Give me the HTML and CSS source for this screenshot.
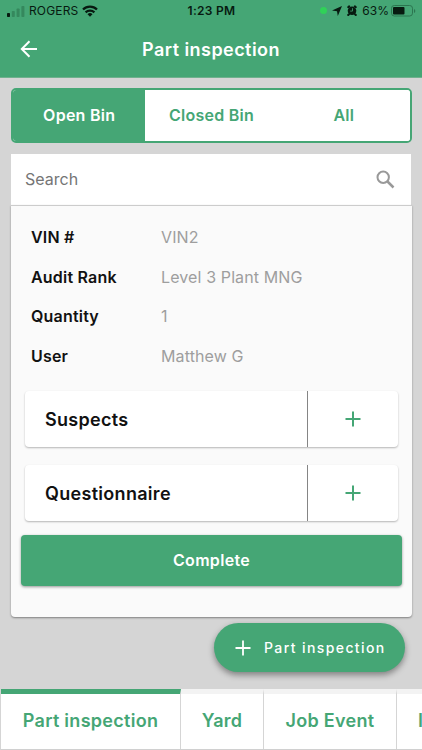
FILE: index.html
```html
<!DOCTYPE html>
<html lang="en">
<head>
    <meta charset="UTF-8">
    <meta name="viewport" content="width=device-width, initial-scale=1.0">
    <title>Part inspection</title>
    <link rel="stylesheet" href="styles.css">
</head>
<body>

<div class="app">
    <header class="header">
        <div class="status">
            <div class="status-left">
                <svg width="18" height="12" viewBox="0 0 18 12">
                    <rect x="0" y="8" width="3" height="4" rx=".7" fill="#071a10"/>
                    <g fill="#35885d">
                        <rect x="4.8" y="6" width="3" height="6" rx=".7"/>
                        <rect x="9.6" y="3.5" width="3" height="8.500" rx=".7"/>
                        <rect x="14.400" y="1" width="3" height="11" rx=".7"/>
                    </g>
                </svg>
                <span class="carrier">ROGERS</span>
                <svg class="wifi" width="16" height="12" viewBox="0 0 16 12">
                    <g fill="none" stroke="#071a10" stroke-width="2.300">
                        <path d="M1 4.500a10 10 0 0 1 14 0"/>
                        <path d="M3.600 7.400a6.300 6.300 0 0 1 8.800 0"/>
                    </g>
                    <path d="M5.500 9.200a3.700 3.700 0 0 1 5 0L8 11.700z" fill="#071a10"/>
                </svg>
            </div>
            <span class="time">1:23 PM</span>
            <div class="status-right">
                <span class="dot"></span>
                <svg class="location" width="10" height="10" viewBox="0 0 10 10"><path d="M10 0L5.800 10 5 5.200 0 4.500z" fill="#071a10"/></svg>
                <svg class="alarm" width="10" height="11" viewBox="0 0 10 11">
                    <circle cx="5" cy="5.800" r="4.300" fill="#071a10"/>
                    <path d="M1.200 2.200L2.200 1.300M8.800 2.200L7.800 1.300M2 9.200L1.200 10M8 9.200l.8.8" stroke="#071a10" stroke-width="2" stroke-linecap="round"/>
                    <path d="M5.500 3.200v2.900H3.200" fill="none" stroke="#45a675" stroke-width=".8"/>
                </svg>
                <span class="percent">63%</span>
                <svg class="battery" width="25" height="12" viewBox="0 0 25 12">
                    <rect x=".5" y=".5" width="21" height="10.500" rx="2.800" fill="none" stroke="#2c7550"/>
                    <rect x="2" y="2" width="11.500" height="7.500" rx="1" fill="#071a10"/>
                    <path d="M23 4v4q1.300-.6 1.300-2T23 4" fill="#2c7550"/>
                </svg>
            </div>
        </div>
        <div class="title-bar">
            <svg class="back" width="18" height="18" viewBox="0 0 18 18"><path d="M17 9H2M9.500 1.300L1.800 9l7.700 7.700" fill="none" stroke="#fff" stroke-width="2"/></svg>
            <h1>Part inspection</h1>
        </div>
    </header>

    <main class="content">
        <div class="segments">
            <button class="segment active">Open Bin</button>
            <button class="segment">Closed Bin</button>
            <button class="segment">All</button>
        </div>

        <div class="search">
            <span>Search</span>
            <svg width="19" height="19" viewBox="0 0 19 19" fill="none" stroke="#999">
                <circle cx="7.200" cy="7.200" r="5.700" stroke-width="2"/>
                <path d="M11.500 11.500l6 6" stroke-width="2.500"/>
            </svg>
        </div>

        <section class="card">
            <dl class="details">
                <dt>VIN #</dt><dd>VIN2</dd>
                <dt>Audit Rank</dt><dd>Level 3 Plant MNG</dd>
                <dt>Quantity</dt><dd>1</dd>
                <dt>User</dt><dd>Matthew G</dd>
            </dl>
            <div class="row">
                <span class="row-name">Suspects</span>
                <span class="row-add"><svg width="16" height="16" viewBox="0 0 16 16"><path d="M8 .5v15M.5 8h15" stroke="#45a675" stroke-width="2"/></svg></span>
            </div>
            <div class="row">
                <span class="row-name">Questionnaire</span>
                <span class="row-add"><svg width="16" height="16" viewBox="0 0 16 16"><path d="M8 .5v15M.5 8h15" stroke="#45a675" stroke-width="2"/></svg></span>
            </div>
            <button class="complete">Complete</button>
        </section>
    </main>

    <button class="fab">
        <svg width="16" height="16" viewBox="0 0 16 16"><path d="M8 .5v15M.5 8h15" stroke="#fff" stroke-width="1.800"/></svg>
        <span>Part inspection</span>
    </button>

    <nav class="tabs">
        <a class="tab tab-parts active">Part inspection</a>
        <a class="tab tab-yard">Yard</a>
        <a class="tab tab-event">Job Event</a>
        <a class="tab tab-next">I</a>
    </nav>
</div>

</body>
</html>
```

FILE: styles.css
```css
* {
    box-sizing: border-box;
}
body {
    margin: 0;
    font-family: Inter, "Liberation Sans", sans-serif;
    background: #d5d5d5;
}
button {
    border: none;
    padding: 0;
    font-family: inherit;
}
svg {
    display: block;
    flex: none;
}
.app {
    position: relative;
    display: flex;
    flex-direction: column;
    height: 750px;
    overflow: hidden;
}
.header {
    height: 78px;
    background: #45a675;
    border-bottom: 1px solid #70b18e;
}
.status {
    display: grid;
    grid-template-columns: 1fr auto 1fr;
    align-items: center;
    height: 21px;
    padding: 0 6px 0 7px;
    font-size: 12px;
    color: #071a10;
}
.status-left,
.status-right {
    display: flex;
    align-items: center;
}
.status-right {
    justify-content: flex-end;
}
.carrier {
    margin: 0 4px 0 4px;
    font-size: 12px;
    letter-spacing: 0.15px;
}
.time {
    font-weight: 600;
    letter-spacing: 0.3px;
}
.dot {
    width: 7px;
    height: 7px;
    margin-right: 5px;
    border-radius: 50%;
    background: #30d158;
}
.location {
    margin-right: 5px;
}
.percent {
    margin: 0 2px 0 5px;
    font-size: 12px;
}
.title-bar {
    display: grid;
    grid-template-columns: 40px 1fr 40px;
    align-items: center;
    height: 56px;
}
.back {
    margin-left: 20px;
}
h1 {
    margin: 0;
    font-size: 18px;
    font-weight: 600;
    letter-spacing: 0.45px;
    color: #fff;
    text-align: center;
}
.content {
    flex: 1;
    padding: 10px 10px 0 11px;
}
.segments {
    display: grid;
    grid-template-columns: repeat(3, 1fr);
    height: 55px;
    border: 2px solid #45a675;
    border-radius: 5px;
    background: #fff;
    overflow: hidden;
}
.segment {
    padding-bottom: 1px;
    background: #fff;
    color: #45a675;
    font-size: 16px;
    font-weight: 600;
    letter-spacing: 0.25px;
}
.segment.active {
    background: #45a675;
    color: #fff;
}
.search {
    display: flex;
    align-items: center;
    justify-content: space-between;
    height: 51px;
    margin: 11px 1px 0 0;
    padding: 0 16px 1px 14px;
    background: #fff;
    color: #757575;
    font-size: 16px;
}
.card {
    height: 412px;
    padding: 11px 14px 0;
    border-top: 1px solid #ccc;
    border-radius: 0 0 4px 4px;
    background: #fafafa;
    box-shadow: 0 1px 2px rgba(0, 0, 0, 0.4);
}
.details {
    display: grid;
    grid-template-columns: 130px 1fr;
    grid-auto-rows: 39.7px;
    align-items: center;
    margin: 0 0 15px 6px;
    font-size: 16px;
}
dt {
    font-weight: 600;
    letter-spacing: 0.2px;
    color: #111;
}
dd {
    margin: 0;
    letter-spacing: 0.12px;
    color: #9e9e9e;
}
.row {
    display: flex;
    height: 56px;
    margin-bottom: 18px;
    border-radius: 4px;
    background: #fff;
    box-shadow: 0 1px 2px rgba(0, 0, 0, 0.28);
}
.row-name {
    display: flex;
    align-items: center;
    width: 283px;
    padding: 1px 0 0 20px;
    border-right: 1px solid #858585;
    font-size: 18px;
    font-weight: 600;
    letter-spacing: 0.3px;
    color: #111;
}
.row-add {
    display: flex;
    flex: 1;
    align-items: center;
    justify-content: center;
    padding-right: 1px;
}
.complete {
    display: block;
    width: 381px;
    height: 51px;
    margin: -4px 0 0 -4px;
    border-radius: 4px;
    background: #45a675;
    box-shadow: 0 1px 3px rgba(0, 0, 0, 0.4);
    color: #fff;
    font-size: 16px;
    font-weight: 600;
    letter-spacing: 0.3px;
}
/* floating button over the page */
.fab {
    position: absolute;
    right: 17px;
    bottom: 78px;
    display: flex;
    align-items: center;
    gap: 13px;
    width: 191px;
    height: 49px;
    padding-left: 21px;
    border-radius: 25px;
    background: #45a675;
    box-shadow: 0 3px 6px rgba(0, 0, 0, 0.4);
    color: #fff;
    font-size: 14px;
    font-weight: 500;
    letter-spacing: 1.4px;
    white-space: nowrap;
}
.tabs {
    display: flex;
    height: 61px;
    background: #fff;
    border-bottom: 1px solid #d0d0d0;
    border-left: 1px solid #d5d5d5;
}
.tab {
    display: flex;
    flex: none;
    align-items: center;
    justify-content: center;
    padding-bottom: 2px;
    border-top: 5px solid #f3f3f3;
    border-right: 1px solid #d5d5d5;
    color: #45a675;
    font-size: 18px;
    font-weight: 600;
    letter-spacing: 0.28px;
}
.tab.active {
    border-top-color: #45a675;
}
.tab-parts {
    width: 180px;
}
.tab-yard {
    width: 83px;
}
.tab-event {
    width: 133px;
}
.tab-next {
    width: 100px;
    justify-content: flex-start;
    padding-left: 21px;
}
```
